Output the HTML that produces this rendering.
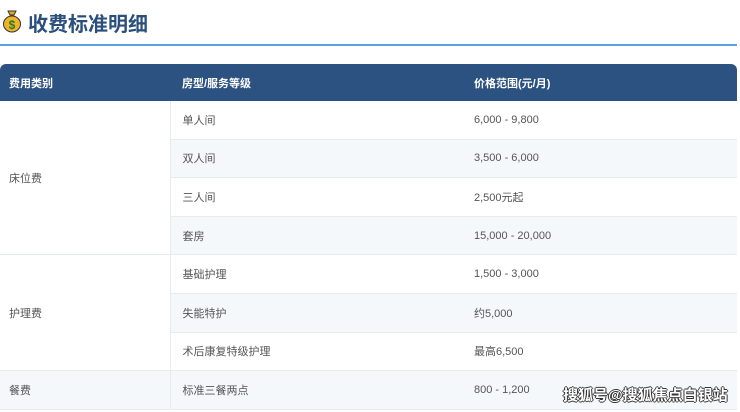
<!DOCTYPE html><html><head><meta charset="utf-8"><style>
body{margin:0;width:740px;height:412px;background:#fff;font-family:"Liberation Sans","Noto Sans CJK SC",sans-serif;position:relative;overflow:hidden}
h1{position:absolute;left:28px;top:8px;margin:0;font-size:20px;color:#2b4f7c;font-weight:bold}
.line{position:absolute;left:0;top:44px;width:737px;height:2px;background:#5a9fde}
table{position:absolute;left:0;top:64px;width:737px;border-collapse:collapse;table-layout:fixed;font-size:11px;color:#555}
th{background:#2c5282;color:#fff;text-align:left;height:37px;padding:0;font-weight:bold;font-size:11px}
th:first-child{border-top-left-radius:6px}th:last-child{border-top-right-radius:6px}
td{height:37.6px;padding:0;border-bottom:1px solid #e6ebf0}
td.c1{padding-left:9px;border-right:1px solid #e6ebf0;background:#fff}
td.c2{padding-left:12px}
tr.alt td.c2,tr.alt td.c3,tr.alt2 td{background:#f5f8fb}
.wm{position:absolute;left:563px;top:384px;font-size:15px;color:#fff;font-weight:bold;text-shadow:-1px 0 #333,1px 0 #333,0 -1px #333,0 1px #333}
</style></head><body>
<svg style="position:absolute;left:2px;top:9px" width="20" height="24" viewBox="0 0 20 24"><path d="M6 2h8l-2 4h-4z" fill="#e9a21a" stroke="#333" stroke-width="1"/><ellipse cx="10" cy="15" rx="8.5" ry="8" fill="#f0b429" stroke="#333" stroke-width="1"/><text x="10" y="20" font-size="12" text-anchor="middle" fill="#2a7a2a" font-weight="bold" font-family="Liberation Sans">$</text></svg>
<h1>收费标准明细</h1><div class="line"></div>
<table>
<colgroup><col style="width:170px"><col style="width:304px"><col></colgroup>
<tr><th style="padding-left:9px">费用类别</th><th style="padding-left:12px">房型/服务等级</th><th>价格范围(元/月)</th></tr>
<tr><td class="c1" rowspan="4">床位费</td><td class="c2">单人间</td><td class="c3">6,000 - 9,800</td></tr>
<tr class="alt"><td class="c2">双人间</td><td class="c3">3,500 - 6,000</td></tr>
<tr><td class="c2">三人间</td><td class="c3">2,500元起</td></tr>
<tr class="alt"><td class="c2">套房</td><td class="c3">15,000 - 20,000</td></tr>
<tr><td class="c1" rowspan="3">护理费</td><td class="c2">基础护理</td><td class="c3">1,500 - 3,000</td></tr>
<tr class="alt"><td class="c2">失能特护</td><td class="c3">约5,000</td></tr>
<tr><td class="c2">术后康复特级护理</td><td class="c3">最高6,500</td></tr>
<tr class="alt2"><td class="c1" style="background:#f5f8fb">餐费</td><td class="c2">标准三餐两点</td><td class="c3">800 - 1,200</td></tr>
</table>
<div class="wm">搜狐号@搜狐焦点白银站</div>
</body></html>
